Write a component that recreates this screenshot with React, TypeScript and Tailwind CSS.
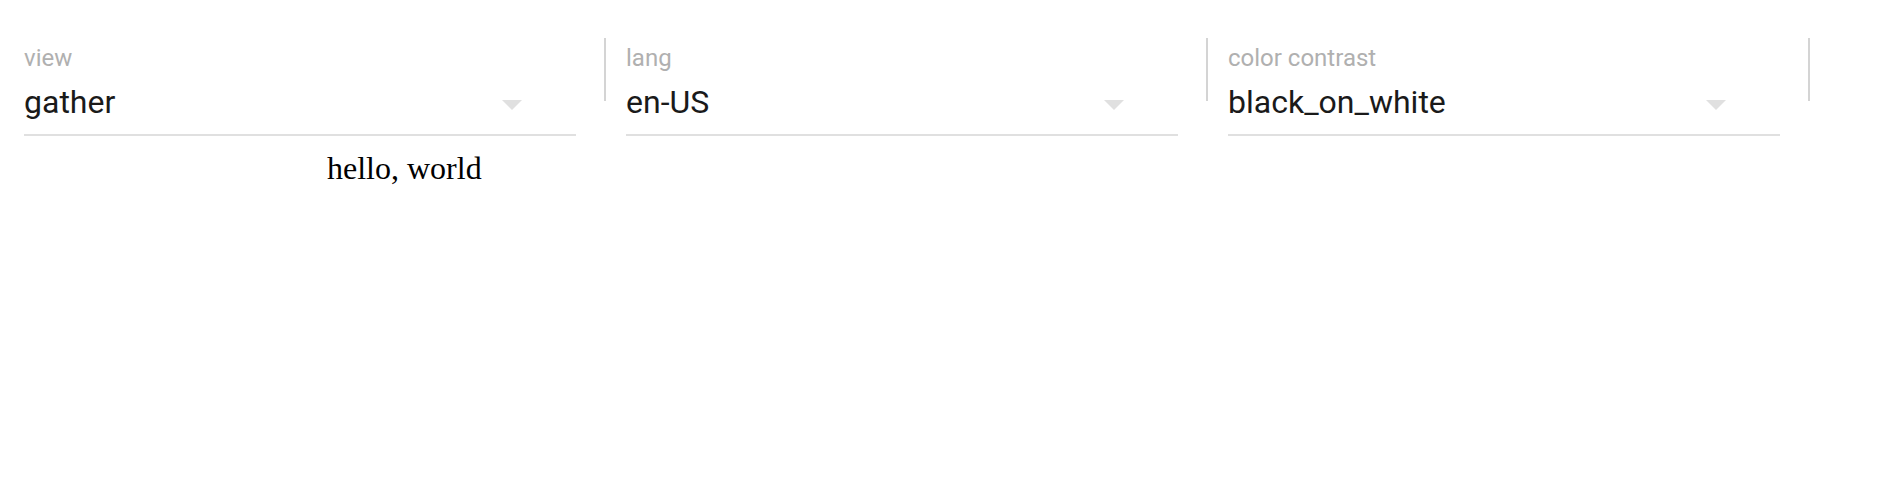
import React from "react";

type Field = {
  label: string;
  value: string;
  first?: boolean;
};

const fields: Field[] = [
  { label: "view", value: "gather", first: true },
  { label: "lang", value: "en-US" },
  { label: "color contrast", value: "black_on_white" },
];

const Arrow: React.FC = () => (
  <svg
    width="20"
    height="10"
    viewBox="0 0 20 10"
    className="mt-[14px] mr-[54px] shrink-0"
  >
    <path d="M0 0 L10 10 L20 0 Z" fill="#e0e0e0" />
  </svg>
);

const App: React.FC = () => {
  return (
    <div className="min-h-screen bg-white font-['Roboto',sans-serif]">
      {/* select fields */}
      <div className="flex items-start">
        {fields.map((f) => (
          <div key={f.label} className="flex items-start">
            <div
              className={
                f.first
                  ? "ml-[24px] w-[552px] pt-[46px] border-b-2 border-[#e0e0e0] pb-[16px]"
                  : "ml-[20px] w-[552px] pt-[46px] border-b-2 border-[#e0e0e0] pb-[16px]"
              }
            >
              <div className="text-[24px] leading-[24px] text-[#b0b0b0]">
                {f.label}
              </div>
              <div className="mt-[16px] flex items-start">
                <div className="flex-1 text-[32px] leading-[32px] text-[#1a1a1a]">
                  {f.value}
                </div>
                <Arrow />
              </div>
            </div>
            <div className="ml-[28px] mt-[38px] h-[63px] w-[2px] bg-[#d4d4d4]" />
          </div>
        ))}
      </div>

      <div className="ml-[327px] mt-[16px] font-['Liberation_Serif',serif] text-[32px] leading-[32px] text-black">
        hello, world
      </div>
    </div>
  );
};

export default App;
